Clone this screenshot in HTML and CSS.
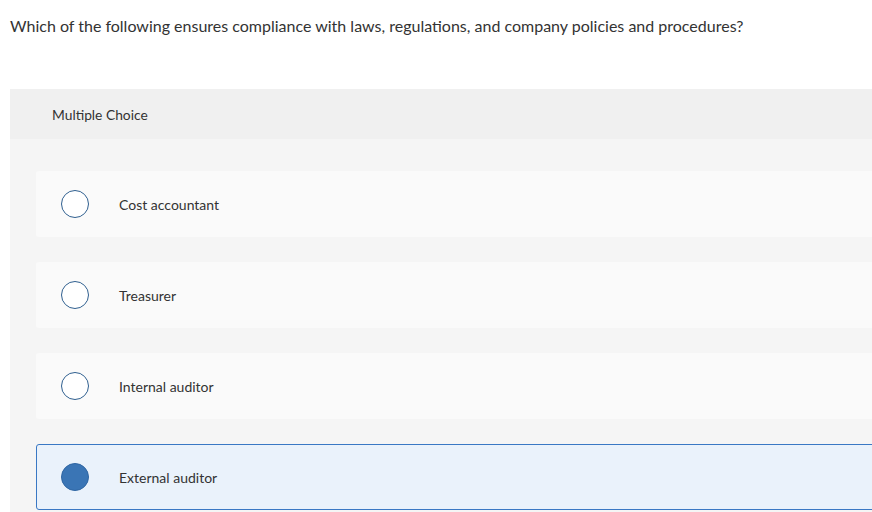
FILE: index.html
```html
<!DOCTYPE html>
<html>
<head>
<meta charset="utf-8">
<link rel="stylesheet" href="styles.css">
</head>
<body>
<div class="page">
  <p class="question">Which of the following ensures compliance with laws, regulations, and company policies and procedures?</p>
  <div class="panel">
    <div class="panel-head">Multiple Choice</div>
    <div class="panel-body">
      <div class="option"><span class="radio"></span><span class="label">Cost accountant</span></div>
      <div class="option"><span class="radio"></span><span class="label">Treasurer</span></div>
      <div class="option"><span class="radio"></span><span class="label">Internal auditor</span></div>
      <div class="option selected"><span class="radio"></span><span class="label">External auditor</span></div>
    </div>
  </div>
</div>
</body>
</html>
```
FILE: styles.css
```css
html, body {
  margin: 0;
  padding: 0;
  background: #fff;
  overflow: hidden;
}
body {
  font-family: Lato, "Open Sans", sans-serif;
  color: #333;
}
.page {
  width: 872px;
  height: 512px;
  overflow: hidden;
  display: flex;
  flex-direction: column;
}
.question {
  margin: 0;
  padding: 16px 0 0 10px;
  height: 89px;
  flex: none;
  box-sizing: border-box;
  font-size: 16px;
  line-height: 20px;
  color: #333;
}
.panel {
  margin-left: 10px;
  width: 900px;
  flex: 1;
  background: #f5f5f5;
}
.panel-head {
  height: 50px;
  background: #f0f0f0;
  display: flex;
  align-items: center;
  padding-left: 42px;
  font-size: 13.8px;
  color: #333;
}
.panel-body {
  padding: 32px 0 0 26px;
  display: flex;
  flex-direction: column;
  gap: 25px;
}
.option {
  height: 66px;
  box-sizing: border-box;
  background: #fafafa;
  border-radius: 3px;
  display: flex;
  align-items: center;
  padding-left: 25px;
}
.radio {
  width: 28px;
  height: 28px;
  box-sizing: border-box;
  border: 1.5px solid #2f5f8f;
  border-radius: 50%;
  background: #fff;
  flex: none;
}
.label {
  margin-left: 30px;
  font-size: 14px;
  color: #333;
}
.option.selected {
  background: #eaf2fb;
  border: 1px solid #3a78c4;
  padding-left: 24px;
}
.option.selected .radio {
  background: #3a75b5;
  border-color: #2f66a3;
}
```
